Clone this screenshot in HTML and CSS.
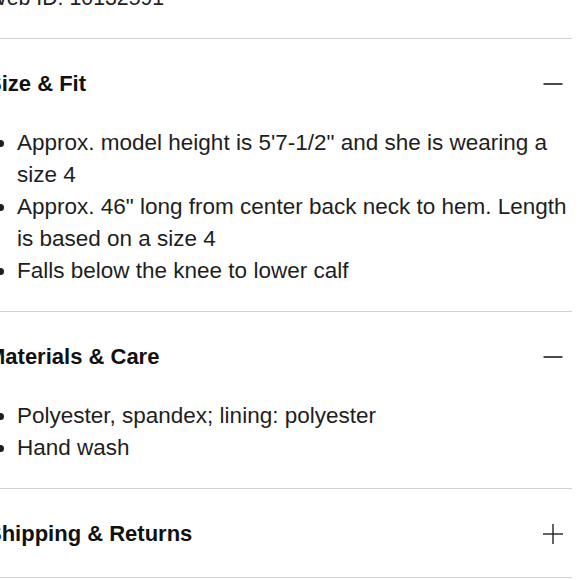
FILE: index.html
```html
<!DOCTYPE html>
<html>
<head>
<meta charset="utf-8">
<link rel="stylesheet" href="styles.css">
</head>
<body>
<div class="page">
  <p class="webid">Web ID: 10132591</p>
  <section class="acc">
    <div class="acc-head">
      <h3 class="acc-title">Size &amp; Fit</h3>
      <svg class="icon" width="20" height="20" viewBox="0 0 20 20"><line x1="0.5" y1="10" x2="19.5" y2="10" stroke="#4a4a4a" stroke-width="2"/></svg>
    </div>
    <ul class="acc-list">
      <li>Approx. model height is 5'7-1/2" and she is wearing a size 4</li>
      <li>Approx. 46" long from center back neck to hem. Length is based on a size 4</li>
      <li>Falls below the knee to lower calf</li>
    </ul>
  </section>
  <section class="acc">
    <div class="acc-head">
      <h3 class="acc-title">Materials &amp; Care</h3>
      <svg class="icon" width="20" height="20" viewBox="0 0 20 20"><line x1="0.5" y1="10" x2="19.5" y2="10" stroke="#4a4a4a" stroke-width="2"/></svg>
    </div>
    <ul class="acc-list">
      <li>Polyester, spandex; lining: polyester</li>
      <li>Hand wash</li>
    </ul>
  </section>
  <section class="acc">
    <div class="acc-head closed">
      <h3 class="acc-title">Shipping &amp; Returns</h3>
      <svg class="icon" width="20" height="20" viewBox="0 0 20 20"><line x1="0" y1="10" x2="20" y2="10" stroke="#222" stroke-width="1.4"/><line x1="10" y1="0" x2="10" y2="20" stroke="#222" stroke-width="1.4"/></svg>
    </div>
  </section>
  <div class="end"></div>
</div>
</body>
</html>
```

FILE: styles.css
```css
html, body {
  margin: 0;
  padding: 0;
  background: #fff;
  overflow: hidden;
}
body {
  font-family: "Liberation Sans", Arial, sans-serif;
  color: #1a1a1a;
}
.page {
  margin-left: -13px;
  margin-top: -18px;
  width: 585px;
}
.webid {
  margin: 0;
  font-size: 21.3px;
  line-height: 32px;
  padding-bottom: 24px;
  color: #222;
}
.acc {
  border-top: 1px solid #d2d2d2;
}
.acc-head {
  display: flex;
  align-items: center;
  justify-content: space-between;
  padding: 30px 9px 29px 0;
}
.acc-title {
  margin: 0;
  font-size: 22px;
  line-height: 29px;
  font-weight: bold;
  color: #111;
}
.icon {
  display: block;
}
.acc-list {
  margin: 0;
  padding: 0 0 24px 30px;
  list-style: disc;
  font-size: 22.5px;
  line-height: 32px;
  color: #1e1e1e;
}
.end {
  border-top: 1px solid #d2d2d2;
}
```
